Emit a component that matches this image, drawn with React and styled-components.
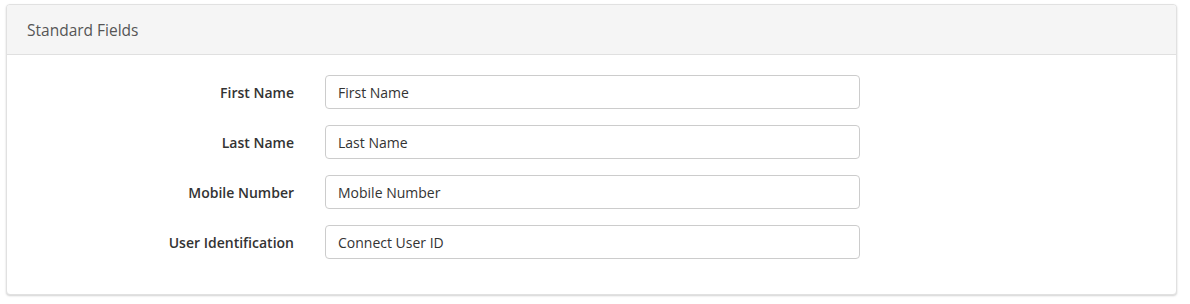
import { Fragment } from 'react'
import styled, { createGlobalStyle } from 'styled-components'

const GlobalStyle = createGlobalStyle`
  body {
    margin: 0;
    background: #ffffff;
    font-family: 'Open Sans', 'Liberation Sans', sans-serif;
  }
`

const Page = styled.div`
  padding: 4px 13px 8px 6px;
`

const Panel = styled.section`
  border: 1px solid #e1e1e1;
  border-radius: 4px;
  background: #ffffff;
  box-shadow: 0 1px 2px rgba(0, 0, 0, 0.18);
  overflow: hidden;
`

const PanelHeader = styled.div`
  height: 49px;
  display: flex;
  align-items: center;
  padding: 0 20px;
  background: #f5f5f5;
  border-bottom: 1px solid #e0e0e0;
  font-size: 15.5px;
  color: #555555;
`

const PanelBody = styled.div`
  padding: 20px 0 35px;
  display: grid;
  grid-template-columns: 287px 535px;
  column-gap: 31px;
  row-gap: 16px;
  align-items: center;
`

const Label = styled.label`
  text-align: right;
  font-size: 14px;
  font-weight: 600;
  color: #333333;
`

const Input = styled.input`
  box-sizing: border-box;
  height: 34px;
  width: 100%;
  padding: 0 12px;
  border: 1px solid #cccccc;
  border-radius: 4px;
  font-family: inherit;
  font-size: 14px;
  color: #333333;
  background: #ffffff;
  &::placeholder {
    color: #333333;
    opacity: 1;
  }
`

const fields = [
  { id: 'first', label: 'First Name', placeholder: 'First Name' },
  { id: 'last', label: 'Last Name', placeholder: 'Last Name' },
  { id: 'mobile', label: 'Mobile Number', placeholder: 'Mobile Number' },
  { id: 'user', label: 'User Identification', placeholder: 'Connect User ID' },
]

const App = () => {
  return (
    <Page>
      <GlobalStyle />
      <Panel>
        <PanelHeader>Standard Fields</PanelHeader>
        <PanelBody>
          {fields.map((f) => (
            <Fragment key={f.id}>
              <Label htmlFor={f.id}>{f.label}</Label>
              <Input id={f.id} placeholder={f.placeholder} />
            </Fragment>
          ))}
        </PanelBody>
      </Panel>
    </Page>
  )
}

export default App
